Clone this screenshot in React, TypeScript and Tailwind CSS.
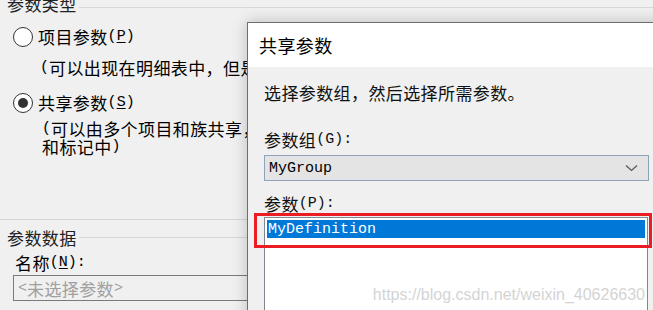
import React from "react";

const CJK = '"Noto Sans CJK SC", "Noto Sans", sans-serif';
const MONO = '"Liberation Mono", "Noto Sans CJK SC", monospace';

function L({ children, u }: { children: React.ReactNode; u?: boolean }) {
  return (
    <span className={`text-[15px] leading-none tracking-normal ${u ? "underline underline-offset-2" : ""}`} style={{ fontFamily: MONO }}>
      {children}
    </span>
  );
}

function Radio({ checked }: { checked?: boolean }) {
  return (
    <span className="flex h-[20px] w-[20px] shrink-0 items-center justify-center rounded-full border border-[#333] bg-white">
      {checked && <span className="h-[10px] w-[10px] rounded-full bg-[#333]" />}
    </span>
  );
}

export default function App() {
  return (
    <div
      className="relative h-[310px] w-[653px] overflow-hidden bg-[#f0f0f0] text-[17px] leading-none tracking-[0.4px] text-black"
      style={{ fontFamily: CJK }}
    >
      {/* Left window content */}
      <div className="flex flex-col">
        <div className="-mt-[7px] flex h-[20px] items-start">
          <span className="ml-[7px] flex h-[20px] items-center pr-[2px] text-[#222]">参数类型</span>
          <div className="mt-[14px] h-px flex-1 bg-[#d8d8d8]" />
        </div>
        <div className="mt-[13px] flex h-[21px] items-center gap-[5px] pl-[13px]">
          <Radio />
          <span className="flex items-center whitespace-nowrap">
            项目参数<L>(</L><L u>P</L><L>)</L>
          </span>
        </div>
        <div className="mt-[10px] flex h-[20px] items-center pl-[40px] whitespace-nowrap">
          <L>(</L>可以出现在明细表中，但是不能出现在标记中<L>)</L>
        </div>
        <div className="mt-[15px] flex h-[21px] items-center gap-[5px] pl-[13px]">
          <Radio checked />
          <span className="flex items-center whitespace-nowrap">
            共享参数<L>(</L><L u>S</L><L>)</L>
          </span>
        </div>
        <div className="mt-[6px] flex flex-col pl-[42px] whitespace-nowrap">
          <div className="flex h-[18px] items-center">
            <L>(</L>可以由多个项目和族共享，可以导出到 ODBC，并且可以出现在明细表
          </div>
          <div className="flex h-[18px] items-center">
            和标记中<L>)</L>
          </div>
        </div>
        <div className="mt-[64px] h-px bg-[#d5d5d5]" />
        <div className="mt-[7px] flex h-[20px] items-center">
          <span className="ml-[7px] flex h-[20px] items-center pr-[2px] text-[#222]">参数数据</span>
          <div className="h-px flex-1 bg-[#d8d8d8]" />
        </div>
        <div className="mt-[5px] flex h-[20px] items-center pl-[15px] whitespace-nowrap">
          名称<L>(</L><L u>N</L><L>)</L>
          <L>:</L>
        </div>
        <div className="ml-[13px] mt-[3px] flex h-[26px] items-center border border-[#7a7a7a] bg-[#f0f0f0] pl-[4px] text-[#a0a0a0] whitespace-nowrap">
          <L>&lt;</L>未选择参数<L>&gt;</L>
        </div>
      </div>

      {/* Dialog window */}
      <div className="absolute left-[247px] top-[22px] h-[300px] w-[430px] border border-[#6e6e6e] bg-[#f0f0f0] shadow-[0_0_14px_rgba(0,0,0,0.22)]">
        <div className="flex h-[44px] items-center bg-white pl-[11px] text-[18px]">共享参数</div>
        <div className="flex flex-col pl-[16px]">
          <div className="mt-[15px] flex h-[20px] items-center text-[#111] whitespace-nowrap">选择参数组，然后选择所需参数。</div>
          <div className="mt-[27px] flex h-[20px] items-center text-[#111] whitespace-nowrap">
            参数组<L>(G):</L>
          </div>
          <div className="mt-[6px] flex h-[26px] w-[385px] items-center justify-between border border-[#8ea3b8] bg-[#e4e4e4] pl-[4px] pr-[10px]">
            <L>MyGroup</L>
            <svg width="13" height="8" viewBox="0 0 13 8" fill="none">
              <path d="M1 1.5 L6.5 6.5 L12 1.5" stroke="#555" strokeWidth="1.2" />
            </svg>
          </div>
          <div className="mt-[12px] flex h-[20px] items-center text-[#111] whitespace-nowrap">
            参数<L>(P):</L>
          </div>
          <div className="mt-[4px] h-[120px] w-[384px] border border-[#828790] bg-white p-[2px]">
            <div className="flex h-[18px] items-center bg-[#0078d7] pl-[1px] text-white">
              <L>MyDefinition</L>
            </div>
          </div>
        </div>
      </div>

      {/* Red annotation box */}
      <div className="absolute left-[254px] top-[213px] h-[35px] w-[398px] border-[3px] border-[#ec1c24]" />

      {/* Watermark */}
      <div
        className="absolute right-[8px] top-[285px] text-[16px] leading-[20px] tracking-normal text-[#d4d4d4] whitespace-nowrap"
        style={{ fontFamily: '"Liberation Sans", Arial, sans-serif', textShadow: "1px 1px 0 #fff" }}
      >
        https://blog.csdn.net/weixin_40626630
      </div>
    </div>
  );
}
